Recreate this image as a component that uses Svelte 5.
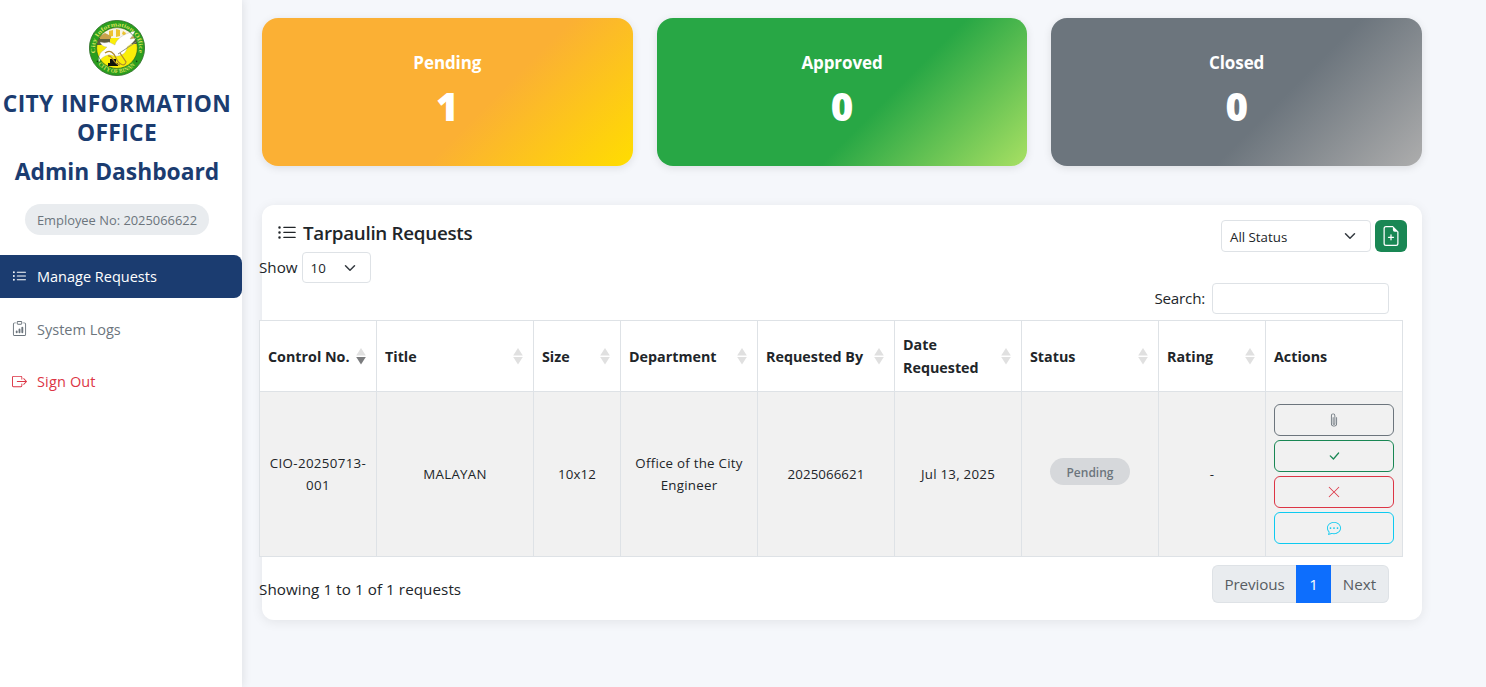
<script>
  const icons = {
    list: ['M5 11.5a.5.5 0 0 1 .5-.5h9a.5.5 0 0 1 0 1h-9a.5.5 0 0 1-.5-.5m0-4a.5.5 0 0 1 .5-.5h9a.5.5 0 0 1 0 1h-9a.5.5 0 0 1-.5-.5m0-4a.5.5 0 0 1 .5-.5h9a.5.5 0 0 1 0 1h-9a.5.5 0 0 1-.5-.5m-3 1a1 1 0 1 0 0-2 1 1 0 0 0 0 2m0 4a1 1 0 1 0 0-2 1 1 0 0 0 0 2m0 4a1 1 0 1 0 0-2 1 1 0 0 0 0 2'],
    clipboard: [
      'M4 11a1 1 0 1 1 2 0v1a1 1 0 1 1-2 0zm6-4a1 1 0 1 1 2 0v5a1 1 0 1 1-2 0zM7 9a1 1 0 0 1 2 0v3a1 1 0 1 1-2 0z',
      'M4 1.5H3a2 2 0 0 0-2 2V14a2 2 0 0 0 2 2h10a2 2 0 0 0 2-2V3.5a2 2 0 0 0-2-2h-1v1h1a1 1 0 0 1 1 1V14a1 1 0 0 1-1 1H3a1 1 0 0 1-1-1V3.5a1 1 0 0 1 1-1h1z',
      'M9.5 1a.5.5 0 0 1 .5.5v1a.5.5 0 0 1-.5.5h-3a.5.5 0 0 1-.5-.5v-1a.5.5 0 0 1 .5-.5zm-3-1A1.5 1.5 0 0 0 5 1.5v1A1.5 1.5 0 0 0 6.5 4h3A1.5 1.5 0 0 0 11 2.5v-1A1.5 1.5 0 0 0 9.5 0z'
    ],
    exit: [
      'M10 12.5a.5.5 0 0 1-.5.5h-8a.5.5 0 0 1-.5-.5v-9a.5.5 0 0 1 .5-.5h8a.5.5 0 0 1 .5.5v2a.5.5 0 0 0 1 0v-2A1.5 1.5 0 0 0 9.5 2h-8A1.5 1.5 0 0 0 0 3.5v9A1.5 1.5 0 0 0 1.5 14h8a1.5 1.5 0 0 0 1.5-1.5v-2a.5.5 0 0 0-1 0z',
      'M15.854 8.354a.5.5 0 0 0 0-.708l-3-3a.5.5 0 0 0-.708.708L14.293 7.5H5.5a.5.5 0 0 0 0 1h8.793l-2.147 2.146a.5.5 0 0 0 .708.708z'
    ],
    filePlus: [
      'M8 6.5a.5.5 0 0 1 .5.5v1.5H10a.5.5 0 0 1 0 1H8.5V11a.5.5 0 0 1-1 0V9.5H6a.5.5 0 0 1 0-1h1.5V7a.5.5 0 0 1 .5-.5',
      'M14 4.5V14a2 2 0 0 1-2 2H4a2 2 0 0 1-2-2V2a2 2 0 0 1 2-2h5.5zm-3 0A1.5 1.5 0 0 1 9.5 3V1H4a1 1 0 0 0-1 1v12a1 1 0 0 0 1 1h8a1 1 0 0 0 1-1V4.5z'
    ],
    paperclip: ['M4.5 3a2.5 2.5 0 0 1 5 0v9a1.5 1.5 0 0 1-3 0V5a.5.5 0 0 1 1 0v7a.5.5 0 0 0 1 0V3a1.5 1.5 0 1 0-3 0v9a2.5 2.5 0 0 0 5 0V5a.5.5 0 0 1 1 0v7a3.5 3.5 0 1 1-7 0z'],
    check: ['M12.736 3.97a.733.733 0 0 1 1.047 0c.286.289.29.756.01 1.05L7.88 12.01a.733.733 0 0 1-1.065.02L3.217 8.384a.757.757 0 0 1 0-1.06.733.733 0 0 1 1.047 0l3.052 3.093 5.4-6.425z'],
    cross: ['M2.146 2.854a.5.5 0 1 1 .708-.708L8 7.293l5.146-5.147a.5.5 0 0 1 .708.708L8.707 8l5.147 5.146a.5.5 0 0 1-.708.708L8 8.707l-5.146 5.147a.5.5 0 0 1-.708-.708L7.293 8z'],
    chat: [
      'M5 8a1 1 0 1 1-2 0 1 1 0 0 1 2 0m4 0a1 1 0 1 1-2 0 1 1 0 0 1 2 0m3 1a1 1 0 1 0 0-2 1 1 0 0 0 0 2',
      'm2.165 15.803.02-.004c1.83-.363 2.948-.842 3.468-1.105A9 9 0 0 0 8 15c4.418 0 8-3.134 8-7s-3.582-7-8-7-8 3.134-8 7c0 1.76.743 3.37 1.97 4.6a10.4 10.4 0 0 1-.524 2.318l-.003.011a11 11 0 0 1-.244.637c-.079.186.074.394.273.362a22 22 0 0 0 .693-.125m.8-3.108a1 1 0 0 0-.287-.801C1.618 10.83 1 9.468 1 8c0-3.192 3.004-6 7-6s7 2.808 7 6-3.004 6-7 6a8 8 0 0 1-2.088-.272 1 1 0 0 0-.711.074c-.387.196-1.24.57-2.634.893a11 11 0 0 0 .398-2'
    ]
  };

  const nav = [
    { label: 'Manage Requests', icon: 'list', kind: 'active' },
    { label: 'System Logs', icon: 'clipboard', kind: 'muted' },
    { label: 'Sign Out', icon: 'exit', kind: 'danger' }
  ];
  const stats = [
    { label: 'Pending', count: 1, kind: 'pending' },
    { label: 'Approved', count: 0, kind: 'approved' },
    { label: 'Closed', count: 0, kind: 'closed' }
  ];
  const columns = [
    { label: 'Control No.', width: 117, sort: 'desc' },
    { label: 'Title', width: 157, sort: 'none' },
    { label: 'Size', width: 87, sort: 'none' },
    { label: 'Department', width: 137, sort: 'none' },
    { label: 'Requested By', width: 137, sort: 'none' },
    { label: 'Date Requested', width: 127, sort: 'none' },
    { label: 'Status', width: 137, sort: 'none' },
    { label: 'Rating', width: 107, sort: 'none' },
    { label: 'Actions', width: 137 }
  ];
  const actions = [
    { icon: 'paperclip', kind: 'secondary' },
    { icon: 'check', kind: 'success' },
    { icon: 'cross', kind: 'danger' },
    { icon: 'chat', kind: 'info' }
  ];
</script>

{#snippet icon(name, size)}
  <svg class="icon {name}" width={size} height={size} viewBox="0 0 16 16" fill="currentColor" aria-hidden="true">
    {#each icons[name] as d}<path {d} />{/each}
  </svg>
{/snippet}

<div class="app">
  <aside class="sidebar">
    <div class="brand">
      <svg class="seal" viewBox="0 0 56 56" width="56" height="56" aria-hidden="true">
        <defs>
          <path id="arc-top" d="M6.500 33A22 22 0 1 1 49.500 33" />
          <path id="arc-bottom" d="M4.500 36A24.700 24.700 0 0 0 51.500 36" />
          <clipPath id="seal-inner"><circle cx="28" cy="28" r="20.4" /></clipPath>
        </defs>
        <circle cx="28" cy="28" r="27.6" fill="#2a9e1e" stroke="#2c6a26" stroke-width="0.8" />
        <g clip-path="url(#seal-inner)">
          <rect width="56" height="56" fill="#faee08" />
          <path d="M6 6h44v12H6z" fill="#f7f5e6" />
          <path d="M7 18h14v7H7zM34 19l14-3v8H34z" fill="#5d5e40" />
          <path d="M20 11l4-1v6l-4 1zm7-2l4 1v6l-4 1zm7 2l3 2-1 3-3-2z" fill="#edc22f" />
          <path d="M11 16l5-3 6 3v3H11zM38 15l8 2v3h-8z" fill="#c9a14b" />
          <path d="M19 46v-3h2v-4h6v4h2v3z" fill="#11130a" />
        </g>
        <path d="M11 22c4 1 6 1 9 0l6 3c1-5 7-11 20-14-1 3-3 5-5 8l6-1c-2 4-5 6-9 9 0 4-3 8-9 9-4 1-7-2-10-1-4 1-7 3-9 7-1-5 1-10 5-12l3-3c-3 0-6-2-7-5z" fill="#fff" stroke="#9d9e88" stroke-width="0.3" />
        <path d="M51 19.500L29 34" stroke="#85867a" stroke-width="0.9" />
        <path d="M16 33c5-4 9 0 11 5 3 7 9 9 10 4l-6-9M19 36c5-1 5 8 12 9" fill="none" stroke="#b08a2c" stroke-width="1.2" />
        <circle cx="28" cy="28" r="20.4" fill="none" stroke="#2b5a20" stroke-width="0.6" />
        <text class="seal-text"><textPath href="#arc-top" textLength="78" lengthAdjust="spacingAndGlyphs">City Information Office</textPath></text>
        <text class="seal-text"><textPath href="#arc-bottom" startOffset="15%" textLength="42" lengthAdjust="spacingAndGlyphs">CITY OF BINAN</textPath></text>
        <circle cx="8.400" cy="41.400" r="0.8" fill="#123f10" /><circle cx="47.600" cy="41.400" r="0.8" fill="#123f10" />
      </svg>
      <h4 class="office">CITY INFORMATION OFFICE</h4>
      <h4 class="dash">Admin Dashboard</h4>
      <span class="employee">Employee No: 2025066622</span>
    </div>
    <nav class="nav">
      {#each nav as item}
        <div class="nav-item {item.kind}">
          {@render icon(item.icon, 15)}
          <span>{item.label}</span>
        </div>
      {/each}
    </nav>
  </aside>

  <main class="main">
    <section class="stats">
      {#each stats as s}
        <div class="stat {s.kind}">
          <h5>{s.label}</h5>
          <div class="count">{s.count}</div>
        </div>
      {/each}
    </section>

    <section class="panel">
      <header class="panel-head">
        <h5>{@render icon('list', 20)}<span>Tarpaulin Requests</span></h5>
        <div class="tools">
          <div class="select status-filter">
            <span>All Status</span>
            <svg width="12" height="12" viewBox="0 0 16 16" fill="none" stroke="#343a40" stroke-width="2" stroke-linecap="round" stroke-linejoin="round"><path d="m2 5 6 6 6-6" /></svg>
          </div>
          <button class="add" aria-label="Add">{@render icon('filePlus', 20)}</button>
        </div>
      </header>

      <div class="grid-area">
        <div class="length">
          <span>Show</span>
          <div class="select page-size">
            <span>10</span>
            <svg width="12" height="12" viewBox="0 0 16 16" fill="none" stroke="#343a40" stroke-width="2" stroke-linecap="round" stroke-linejoin="round"><path d="m2 5 6 6 6-6" /></svg>
          </div>
        </div>
        <div class="search">
          <span>Search:</span>
          <input type="text" aria-label="Search" />
        </div>

        <table>
          <colgroup>
            {#each columns as c}<col style="width: {c.width}px" />{/each}
          </colgroup>
          <thead>
            <tr>
              {#each columns as c}
                <th>
                  <div class="th">
                    <span class="label">{c.label}</span>
                    {#if c.sort}
                      <svg class="sort {c.sort}" width="10" height="17" viewBox="0 0 10 17"><path class="up" d="M5 0l4.800 7.500H.2z" /><path class="down" d="M.2 9h9.600L5 16.500z" /></svg>
                    {/if}
                  </div>
                </th>
              {/each}
            </tr>
          </thead>
          <tbody>
            <tr>
              <td class="control">CIO-20250713-001</td>
              <td>MALAYAN</td>
              <td class="numeric">10x12</td>
              <td>Office of the City Engineer</td>
              <td class="numeric">2025066621</td>
              <td>Jul 13, 2025</td>
              <td><span class="badge">Pending</span></td>
              <td>-</td>
              <td>
                <div class="actions">
                  {#each actions as a}
                    <button class="act {a.kind}" aria-label={a.icon}>{@render icon(a.icon, 14)}</button>
                  {/each}
                </div>
              </td>
            </tr>
          </tbody>
        </table>

        <footer class="foot">
          <span class="summary">Showing 1 to 1 of 1 requests</span>
          <div class="pager">
            <span class="page prev">Previous</span>
            <span class="page current">1</span>
            <span class="page next">Next</span>
          </div>
        </footer>
      </div>
    </section>
  </main>
</div>

<style>
  :global(body) { background: #f5f7fb; overflow: hidden; }
  .app, .app * { box-sizing: border-box; }
  .app {
    display: flex;
    height: 687px;
    overflow: hidden;
    font-family: "Open Sans", "Noto Sans", sans-serif;
    font-size: 15.2px;
    line-height: 24px;
    color: #212529;
  }
  h4, h5 { margin: 0; }
  .icon { display: block; flex: none; }

  .sidebar { width: 242px; flex: none; background: #fff; box-shadow: 2px 0 8px rgba(0, 0, 0, 0.08); }
  .brand { width: 234px; padding-top: 20px; display: flex; flex-direction: column; align-items: center; text-align: center; }
  .seal { display: block; }
  .seal-text { font-family: "Liberation Serif", serif; font-size: 6px; font-weight: 700; fill: #d3e05a; }
  .brand h4 { font-size: 22.8px; line-height: 29px; font-weight: 700; color: #1b3c70; }
  .office { margin-top: 13px; letter-spacing: 0.35px; word-spacing: 1px; }
  .brand .dash { margin-top: 10px; }
  .employee { margin-top: 18px; height: 31px; line-height: 32px; padding: 0 12px; border-radius: 16px; background: #e9ecef; color: #6c757d; font-size: 12.9px; }
  .nav { margin-top: 20px; display: flex; flex-direction: column; gap: 9.5px; }
  .nav-item { height: 43px; padding-left: 12px; display: flex; align-items: center; gap: 10px; border-radius: 0 8px 8px 0; font-size: 14.5px; }
  .nav-item .icon { margin-bottom: 1px; }
  .nav-item .clipboard { margin-bottom: 2px; }
  .active { background: #1b3c70; color: #fff; }
  .muted { color: #6c757d; }
  .muted span { padding-top: 1px; }
  .nav-item.danger { color: #dc3545; letter-spacing: 0.15px; }

  .main { flex: 1; padding: 18px 64px 0 20px; }
  .stats { display: grid; grid-template-columns: repeat(3, 1fr); gap: 24px; }
  .stat { height: 148px; border-radius: 16px; padding-top: 32px; text-align: center; color: #fff; box-shadow: 0 2px 8px rgba(0, 0, 0, 0.1); }
  .stat h5 { font-size: 17px; line-height: 26px; font-weight: 700; letter-spacing: -0.1px; }
  .count { margin-top: 5px; font-size: 38.5px; line-height: 50px; font-weight: 800; }
  .pending { background: linear-gradient(135deg, #fbb034 60%, #ffdd00 100%); }
  .approved { background: linear-gradient(135deg, #28a745 60%, #a8e063 100%); }
  .closed { background: linear-gradient(135deg, #6c757d 60%, #adadad 100%); }

  .panel { margin-top: 39px; height: 415px; border-radius: 12px; background: #fff; box-shadow: 0 2px 12px rgba(0, 0, 0, 0.08); }
  .panel-head { height: 47px; padding: 15px 15px 0; display: flex; justify-content: space-between; }
  .panel-head h5 { height: 26px; display: flex; align-items: center; gap: 6px; font-size: 18.8px; line-height: 24px; font-weight: 600; letter-spacing: -0.28px; }
  .tools { display: flex; gap: 4px; }
  .select { display: flex; align-items: center; justify-content: space-between; border: 1px solid #dee2e6; border-radius: 4px; background: #fff; font-size: 13.3px; padding-left: 8px; }
  .status-filter { width: 150px; height: 32px; padding-right: 14px; }
  .status-filter span { padding-top: 2px; }
  .add { width: 32px; height: 32px; border: 0; border-radius: 6px; padding: 6px; background: #198754; color: #fff; }

  .grid-area { margin-left: -3px; width: 1144px; }
  .length { height: 31px; display: flex; align-items: center; gap: 4px; }
  .length > span { padding-bottom: 2px; }
  .page-size { width: 69px; height: 31px; padding-right: 14px; }
  .search { height: 37px; padding-right: 14px; display: flex; justify-content: flex-end; align-items: flex-start; gap: 7px; line-height: 31px; letter-spacing: -0.22px; }
  .search input { width: 177px; height: 31px; border: 1px solid #dee2e6; border-radius: 4px; padding: 0; background: #fff; }

  table { width: 1144px; table-layout: fixed; border-collapse: separate; border-spacing: 0; border: solid #dee2e6; border-width: 1px 0 0 1px; }
  th, td { border: solid #dee2e6; border-width: 0 1px 1px 0; padding: 0 8px; vertical-align: middle; }
  th { height: 71px; background: #fff; text-align: left; font-weight: 700; font-size: 14.3px; line-height: 23px; }
  .th { display: flex; align-items: center; justify-content: space-between; margin-right: 2px; }
  .sort { flex: none; fill: #e0e0e0; }
  .sort.desc .down { fill: #7b7c7e; }
  td { height: 165px; background: #f1f1f1; text-align: center; font-size: 13.3px; line-height: 22px; letter-spacing: 0.25px; }
  .control { letter-spacing: 0.35px; }
  .numeric { letter-spacing: 0.08px; }
  .badge { display: inline-block; height: 27px; line-height: 29px; padding: 0 16.5px; border-radius: 14px; background: #d6d8db; color: #6c757d; font-size: 12px; font-weight: 600; letter-spacing: 0; position: relative; top: -3px; }
  .actions { display: flex; flex-direction: column; gap: 4px; }
  .act { height: 32px; border: 1px solid; border-radius: 6px; background: none; padding: 0; display: flex; align-items: center; justify-content: center; }
  .secondary { color: #6c757d; }
  .success { color: #198754; }
  .act.danger { color: #dc3545; }
  .info { color: #0dcaf0; }

  .foot { display: flex; justify-content: space-between; padding: 8px 14px 0 0; }
  .summary { margin-top: 12px; letter-spacing: 0.07px; }
  .pager { display: flex; height: 38px; }
  .page { height: 38px; line-height: 36px; text-align: center; border: 1px solid #dee2e6; background: #e9ecef; color: #585d62; }
  .prev { width: 84px; border-right: 0; border-radius: 6px 0 0 6px; letter-spacing: -0.1px; }
  .current { width: 35px; background: #0d6efd; border-color: #0d6efd; color: #fff; }
  .next { width: 58px; border-left: 0; border-radius: 0 6px 6px 0; }
</style>
